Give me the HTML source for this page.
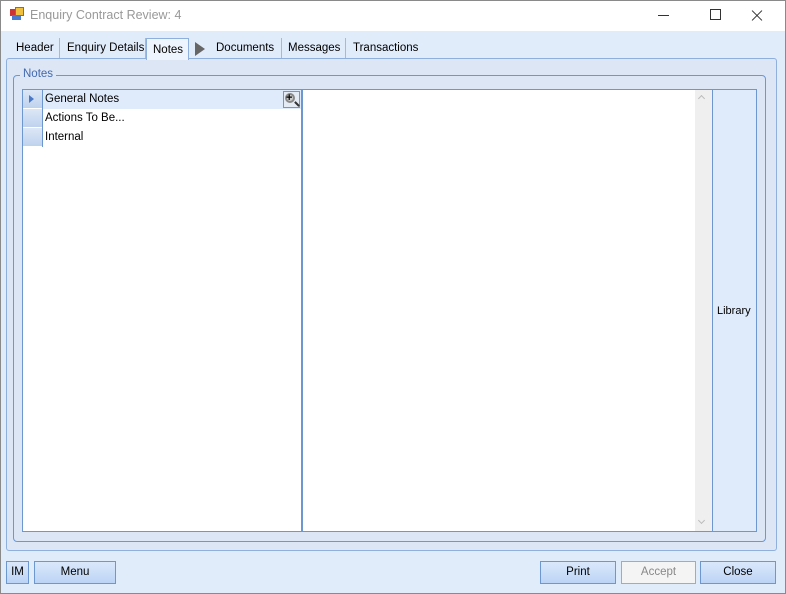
<!DOCTYPE html>
<html><head><style>
*{margin:0;padding:0;box-sizing:border-box}
body{width:786px;height:594px;overflow:hidden;font-family:"Liberation Sans",sans-serif;font-size:11.5px;background:#fff;position:relative;white-space:nowrap}
.a{position:absolute}
.win{left:0;top:0;width:786px;height:594px;border:1px solid #8a8a8a;background:#e1ecfb}
.title{left:1px;top:1px;width:784px;height:30px;background:#fff}
.tab{top:38px;height:21px;color:#000;padding-top:4px;border-right:1px solid #a9b9d3}
.btn{height:23px;border:1px solid #6d97d1;background:linear-gradient(#dbe8fb,#bcd4f5);text-align:center;line-height:21px}
.hdr{left:23px;width:19px;height:19px;background:linear-gradient(#dce7f6,#bfd2ee);border-bottom:1px solid #fff}
</style></head><body>
<div class="a win"></div>
<div class="a title"></div>
<div class="a" style="left:10px;top:9px;width:7px;height:7px;background:#c33"></div>
<div class="a" style="left:15px;top:7px;width:9px;height:9px;background:#f0c040;border:1px solid #a07000"></div>
<div class="a" style="left:12px;top:15px;width:9px;height:5px;background:#4a7ad0"></div>
<div class="a" style="left:30px;top:8px;font-size:12.5px;color:#999">Enquiry Contract Review: 4</div>
<div class="a" style="left:658px;top:15px;width:11px;height:1px;background:#333"></div>
<div class="a" style="left:710px;top:9px;width:11px;height:11px;border:1px solid #333"></div>
<div class="a" style="left:750px;top:15px;width:14px;height:1px;background:#333;transform:rotate(45deg)"></div>
<div class="a" style="left:750px;top:15px;width:14px;height:1px;background:#333;transform:rotate(-45deg)"></div>

<div class="a tab" style="left:8px;width:52px;padding-left:8px">Header</div>
<div class="a tab" style="left:60px;width:86px;padding-left:7px">Enquiry Details</div>
<div class="a" style="left:146px;top:38px;width:43px;height:22px;background:#eef4fd;border:1px solid #8fb0dd;border-bottom:none;padding:5px 0 0 6px;z-index:2">Notes</div>
<div class="a" style="left:195px;top:42px;width:0;height:0;border-left:10px solid #666;border-top:7px solid transparent;border-bottom:7px solid transparent"></div>
<div class="a tab" style="left:209px;width:73px;padding-left:7px">Documents</div>
<div class="a tab" style="left:282px;width:64px;padding-left:6px">Messages</div>
<div class="a tab" style="left:346px;width:80px;padding-left:7px;border:none">Transactions</div>

<div class="a" style="left:6px;top:58px;width:771px;height:493px;border:1px solid #8fb0dd;border-radius:3px;background:#dce6f4"></div>
<div class="a" style="left:13px;top:75px;width:753px;height:467px;border:1px solid #6d97d1;border-radius:4px"></div>
<div class="a" style="left:20px;top:68px;background:#dce6f4;padding:0 3px;color:#4269b0">Notes</div>

<div class="a" style="left:22px;top:89px;width:281px;height:443px;border:1px solid #6d97d1;border-right:2px solid #6d97d1;background:#fff"></div>
<div class="a" style="left:42px;top:90px;width:259px;height:19px;background:#dfeafb"></div>
<div class="a hdr" style="top:90px"></div>
<div class="a hdr" style="top:109px"></div>
<div class="a hdr" style="top:128px"></div>
<div class="a" style="left:42px;top:90px;width:1px;height:57px;background:#6d97d1"></div>
<div class="a" style="left:29px;top:95px;border-left:5px solid #4a78c8;border-top:4px solid transparent;border-bottom:4px solid transparent"></div>
<div class="a" style="left:45px;top:93px">General Notes</div>
<div class="a" style="left:45px;top:112px">Actions To Be...</div>
<div class="a" style="left:45px;top:131px">Internal</div>
<div class="a" style="left:283px;top:91px;width:17px;height:17px;border:1px solid #6d97d1;background:#e4ebf5"></div>
<div class="a" style="left:285px;top:93px;width:10px;height:10px;border-radius:50%;border:2px solid #888;background:#ccc"></div>
<div class="a" style="left:286px;top:93px;font-size:11px;font-weight:bold;line-height:10px">+</div>
<div class="a" style="left:294px;top:103px;width:6px;height:2px;background:#333;transform:rotate(45deg)"></div>

<div class="a" style="left:302px;top:89px;width:455px;height:443px;border:1px solid #6d97d1;background:#fff"></div>
<div class="a" style="left:695px;top:90px;width:17px;height:441px;background:#efefef"></div>
<div class="a" style="left:699px;top:96px;width:5px;height:5px;border-left:1px solid #bbb;border-top:1px solid #bbb;transform:rotate(45deg)"></div>
<div class="a" style="left:699px;top:518px;width:5px;height:5px;border-right:1px solid #bbb;border-bottom:1px solid #bbb;transform:rotate(45deg)"></div>
<div class="a" style="left:712px;top:90px;width:44px;height:441px;background:#dfeafb;border-left:1px solid #6d97d1"></div>
<div class="a" style="left:717px;top:305px;font-size:11px">Library</div>

<div class="a btn" style="left:6px;top:561px;width:23px">IM</div>
<div class="a btn" style="left:34px;top:561px;width:82px">Menu</div>
<div class="a btn" style="left:540px;top:561px;width:76px">Print</div>
<div class="a btn" style="left:621px;top:561px;width:75px;background:#f4f4f4;border-color:#aaa;color:#888">Accept</div>
<div class="a btn" style="left:700px;top:561px;width:76px">Close</div>
</body></html>
